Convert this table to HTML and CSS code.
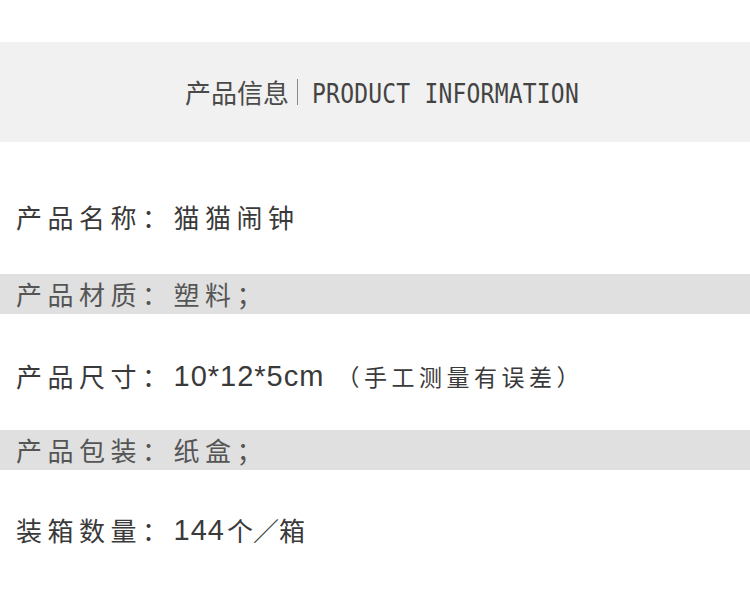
FILE: index.html
```html
<!DOCTYPE html>
<html lang="zh">
<head>
<meta charset="utf-8">
<title>产品信息</title>
<link rel="stylesheet" href="styles.css">
</head>
<body>
<header class="header">
  <span class="title-cn">产品信息</span>
  <span class="sep"></span>
  <span class="title-en">PRODUCT INFORMATION</span>
</header>
<main class="rows">
  <div class="row r1"><span class="cn">产品名称：猫猫闹钟</span></div>
  <div class="row r2 band"><span class="cn">产品材质：塑料；</span></div>
  <div class="row r3"><span class="cn">产品尺寸：</span><span class="num">10*12*5cm</span><span class="note">（手工测量有误差）</span></div>
  <div class="row r4 band"><span class="cn">产品包装：纸盒；</span></div>
  <div class="row r5"><span class="cn">装箱数量：</span><span class="num qty">144</span><span class="cn tight">个／箱</span></div>
</main>
</body>
</html>
```
FILE: styles.css
```css
html, body {
  margin: 0;
  padding: 0;
  background: #ffffff;
}
body {
  width: 750px;
  height: 597px;
  overflow: hidden;
  font-family: "Noto Sans CJK SC", "Liberation Sans", sans-serif;
}
.header {
  margin-top: 42px;
  height: 100px;
  background: #f1f1f1;
  display: flex;
  align-items: center;
  justify-content: center;
  padding-left: 14px;
  box-sizing: border-box;
}
.title-cn {
  font-size: 26px;
  color: #4a4a4a;
  line-height: 30px;
}
.sep {
  width: 1px;
  height: 26px;
  background: #8a8a8a;
  margin: 0 14px 0 8px;
}
.title-en {
  font-family: "DejaVu Sans Mono", "Liberation Mono", monospace;
  font-size: 23px;
  letter-spacing: 0.2px;
  color: #444;
  display: inline-block;
  transform: translateY(2px) scaleY(1.12);
}
.rows {
  display: flex;
  flex-direction: column;
  padding-top: 55px;
}
.row {
  height: 40px;
  display: flex;
  align-items: center;
  padding-left: 16px;
  color: #3a3a3a;
}
.band {
  background: #e0e0e0;
  color: #555;
}
.r2 { margin-top: 37px; }
.r3 { margin-top: 42px; }
.r4 { margin-top: 34px; }
.r5 { margin-top: 40px; }
.cn {
  font-size: 26px;
  letter-spacing: 5.5px;
  line-height: 40px;
}
.tight {
  letter-spacing: 0;
  margin-left: 2px;
}
.num {
  font-family: "Liberation Sans", Arial, sans-serif;
  font-size: 29px;
  letter-spacing: 1px;
  color: #3a3a3a;
  line-height: 40px;
  margin-right: 4px;
}
.qty {
  margin-right: 0;
}
.note {
  font-size: 23px;
  letter-spacing: 4.5px;
  color: #3a3a3a;
  line-height: 40px;
  margin-left: 8px;
}
```
